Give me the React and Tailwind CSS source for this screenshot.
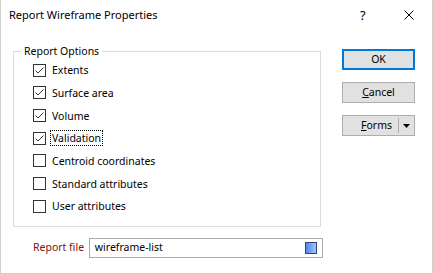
import React from "react";

const options = [
  { label: "Extents", checked: true },
  { label: "Surface area", checked: true },
  { label: "Volume", checked: true },
  { label: "Validation", checked: true, focus: true },
  { label: "Centroid coordinates", checked: false },
  { label: "Standard attributes", checked: false },
  { label: "User attributes", checked: false },
];

const CheckBox = ({ checked }) => (
  <span className="w-[13px] h-[13px] border border-[#333] bg-white flex items-center justify-center shrink-0">
    {checked && (
      <svg width="11" height="11" viewBox="0 0 11 11">
        <polyline
          points="1.5,5.5 4,8 9.5,2.5"
          fill="none"
          stroke="#333"
          strokeWidth="1"
        />
      </svg>
    )}
  </span>
);

const App = () => {
  return (
    <div
      className="w-[433px] h-[274px] bg-white border-x border-b border-[#cfcfcf] flex flex-col text-[10.5px] text-black"
      style={{ fontFamily: '"Noto Sans", "Liberation Sans", sans-serif' }}
    >
      {/* title bar */}
      <div className="h-[30px] flex items-center pl-[8px] shrink-0">
        <span className="flex-1 text-[11px]">Report Wireframe Properties</span>
        <span className="w-[8px] text-[13px] leading-none mr-[36px]">?</span>
        <svg width="10" height="10" viewBox="0 0 10 10" className="mr-[18px]">
          <path d="M0.5 0.5 L9.5 9.5 M9.5 0.5 L0.5 9.5" stroke="#000" strokeWidth="1" />
        </svg>
      </div>

      {/* body */}
      <div className="flex pt-[13px]">
        <div className="ml-[12px] w-[310px] flex flex-col">
          <fieldset className="border border-[#dcdcdc] h-[184px] w-[308px]">
            <legend className="ml-[7px] px-[3px] leading-[16px]">Report Options</legend>
            <div className="flex flex-col pl-[19px]">
              {options.map((opt) => (
                <div key={opt.label} className="h-[22.67px] flex items-center gap-[5px]">
                  <CheckBox checked={opt.checked} />
                  <span
                    className={`leading-[14px] px-px ${
                      opt.focus ? "outline outline-1 outline-dotted outline-black" : ""
                    }`}
                  >
                    {opt.label}
                  </span>
                </div>
              ))}
            </div>
          </fieldset>

          <div className="flex items-center mt-[11px] h-[20px]">
            <span className="w-[76px] pl-[20px] whitespace-nowrap text-[#7c1414]">Report file</span>
            <div className="w-[235px] h-[20px] border border-[#adadad] flex items-center pl-[5px] pr-[5px]">
              <span className="flex-1">wireframe-list</span>
              <span className="w-[12px] h-[12px] border border-[#2d4a6e] bg-gradient-to-r from-[#4f86ec] to-[#a6c3f7]" />
            </div>
          </div>
        </div>

        <div className="ml-[19px] w-[73px] pt-[6px] flex flex-col gap-[12px]">
          <button className="h-[21px] border-2 border-[#0078d7] bg-[#e1e1e1] flex items-center justify-center">
            OK
          </button>
          <button className="h-[21px] border border-[#adadad] bg-[#e1e1e1] flex items-center justify-center">
            <span>
              <u>C</u>ancel
            </span>
          </button>
          <button className="h-[21px] border border-[#adadad] bg-[#e1e1e1] flex items-center">
            <span className="flex-1 text-right pr-[6px]">
              <u>F</u>orms
            </span>
            <span className="w-px h-[15px] bg-[#adadad]" />
            <span className="w-[15px] flex items-center justify-center">
              <svg width="7" height="4" viewBox="0 0 7 4">
                <path d="M0 0 H7 L3.5 4 Z" fill="#000" />
              </svg>
            </span>
          </button>
        </div>
      </div>
    </div>
  );
};

export default App;
